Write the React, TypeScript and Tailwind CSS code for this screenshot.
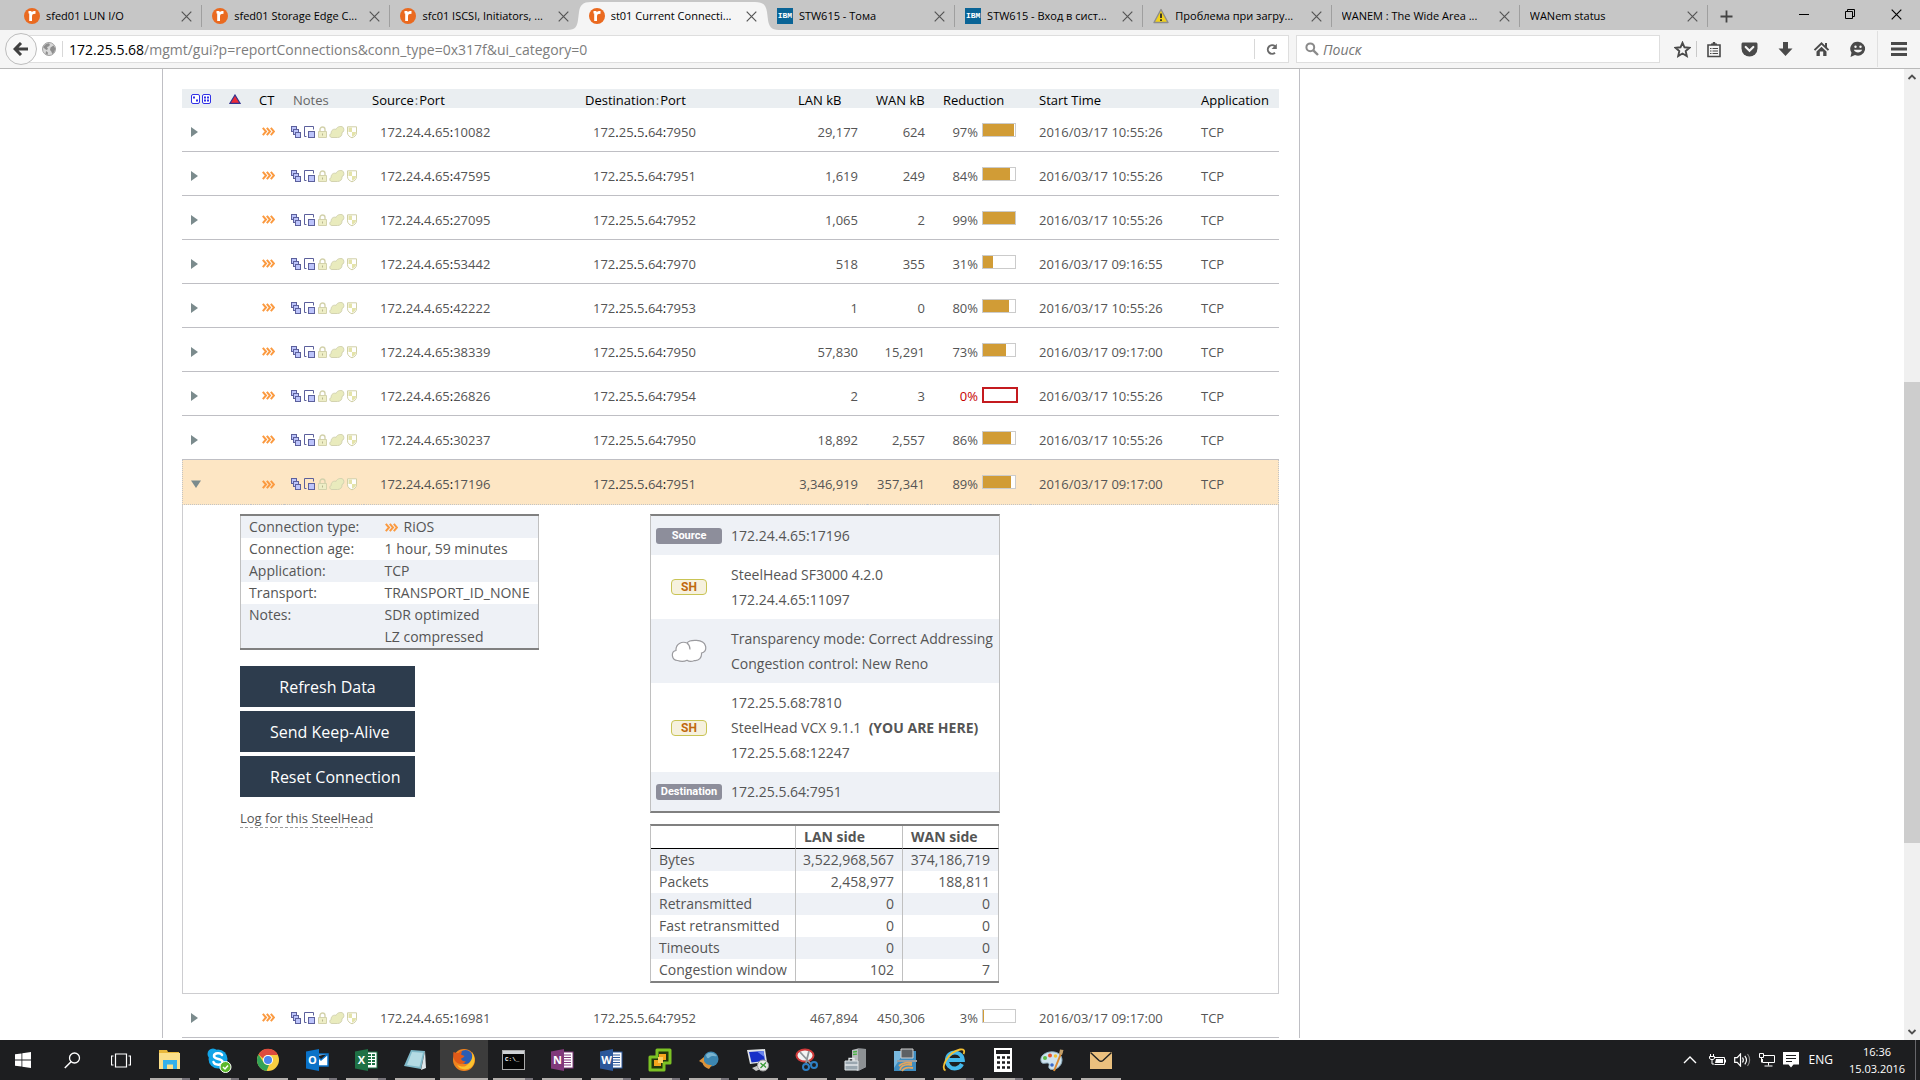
import React from "react";

type IconProps = { className?: string };

/* ---------- browser icons ---------- */

const RiverbedIcon = () => (
  <svg width="16" height="16" viewBox="0 0 16 16" className="shrink-0">
    <circle cx="8" cy="8" r="8" fill="#ea6a20" />
    <path d="M4.500 3h3v1.200C8.300 3.300 9.500 3 11.500 3v2.800C8.900 5.800 8 6.500 8 8.500V13H5.200V5.400H4.500z" fill="#fff" />
  </svg>
);

const IbmIcon = () => (
  <span className="flex h-4 w-4 shrink-0 items-center justify-center bg-[#0a6496] font-['Liberation_Mono'] text-[8px] font-bold leading-none text-white">
    IBM
  </span>
);

const WarningIcon = () => (
  <svg width="16" height="16" viewBox="0 0 16 16" className="shrink-0">
    <path d="M8 1.500 15 14.500H1z" fill="#f2d21b" stroke="#8d8d8d" strokeWidth="1.400" strokeLinejoin="round" />
    <path d="M8 5.500v4.500M8 11.300v1.700" stroke="#222" strokeWidth="1.700" />
  </svg>
);

const CloseIcon = ({ className }: IconProps) => (
  <svg width="11" height="11" viewBox="0 0 11 11" className={className}>
    <path d="M.7.7l9.600 9.600M10.300.7.7 10.300" stroke="currentColor" strokeWidth="1.200" />
  </svg>
);

const BackArrow = () => (
  <svg width="16" height="14" viewBox="0 0 16 14">
    <path d="M8 1 2 7l6 6M2.500 7H15" fill="none" stroke="#404040" strokeWidth="3" />
  </svg>
);

const GlobeIcon = () => (
  <svg width="14" height="14" viewBox="0 0 14 14">
    <circle cx="7" cy="7" r="6.500" fill="#d8d8d8" stroke="#a2a2a2" />
    <path d="M1 5l3-3 3-.8L8 3 6.500 4.500 5 5l1 2-1.500 1L3 7zM8.500 5.500l3-2 1.800 3-1 3.500-2 2-1-2.500L8 8zM4 9l2 1.500L5.500 13 3.500 12z" fill="#8e8e8e" />
  </svg>
);

const ReloadIcon = () => (
  <svg width="13" height="13" viewBox="0 0 13 13">
    <path d="M10 9.700A4.300 4.300 0 1 1 10 3.300" fill="none" stroke="#6a6a6a" strokeWidth="2" />
    <path d="M11.800.8v5.200H6.600z" fill="#6a6a6a" />
  </svg>
);

const SearchIcon = () => (
  <svg width="14" height="14" viewBox="0 0 14 14">
    <circle cx="5.300" cy="5.300" r="3.900" fill="none" stroke="#8a8a8a" strokeWidth="2" />
    <path d="M8.300 8.300l4.700 4.700" stroke="#8a8a8a" strokeWidth="2.400" />
  </svg>
);

const StarIcon = () => (
  <svg width="17" height="17" viewBox="0 0 17 17">
    <path d="M8.500 1.800l2 4.500 4.900.5-3.700 3.300 1.100 4.900-4.300-2.500L4.200 15l1.100-4.900L1.600 6.800l4.900-.5z" fill="none" stroke="#4a4a4a" strokeWidth="1.900" />
  </svg>
);

const ListIcon = () => (
  <svg width="16" height="17" viewBox="0 0 16 17">
    <path d="M2 4h12v11.500H2z" fill="none" stroke="#4a4a4a" strokeWidth="1.600" />
    <path d="M5 4V2.500h1.500L7 1h2l.5 1.500H11V4z" fill="#4a4a4a" />
    <path d="M4 7.500h1.500M6.500 7.500H12M4 10h1.500M6.500 10H12M4 12.500h1.500M6.500 12.500H12" stroke="#4a4a4a" strokeWidth="1.200" />
  </svg>
);

const PocketIcon = () => (
  <svg width="17" height="15" viewBox="0 0 17 15">
    <path d="M2 .5h13c.8 0 1.500.7 1.500 1.500v4.500a8 8 0 0 1-16 0V2C.5 1.200 1.200.5 2 .5z" fill="#4a4a4a" />
    <path d="M4.700 5l3.800 3.800L12.300 5" fill="none" stroke="#f5f5f5" strokeWidth="2.200" strokeLinecap="round" />
  </svg>
);

const DownloadIcon = () => (
  <svg width="15" height="16" viewBox="0 0 15 16">
    <path d="M5 1h5v6.500h4.500L7.500 15 .5 7.500H5z" fill="#4a4a4a" />
  </svg>
);

const HomeIcon = () => (
  <svg width="17" height="16" viewBox="0 0 17 16">
    <path d="M8.500 1 .8 8.500l1.400 1.300 6.300-6 6.300 6 1.400-1.300L14 6.300V2h-2v2.400z" fill="#4a4a4a" />
    <path d="M3.500 10.500l5-4.700 5 4.700V15h-3.300v-4.500H6.800V15H3.500z" fill="#4a4a4a" />
  </svg>
);

const SmileIcon = () => (
  <svg width="17" height="17" viewBox="0 0 17 17">
    <path d="M9 .8a7 7 0 1 1-3 13.300L1.500 16l1-4.300A7 7 0 0 1 9 .8z" fill="#4a4a4a" />
    <circle cx="6.500" cy="5.800" r="1.200" fill="#f5f5f5" />
    <circle cx="11.500" cy="5.800" r="1.200" fill="#f5f5f5" />
    <path d="M4.800 8.800c1.500 3.500 6.900 3.500 8.400 0z" fill="#f5f5f5" />
  </svg>
);

const MenuIcon = () => (
  <svg width="16" height="14" viewBox="0 0 16 14">
    <path d="M0 1.500h16M0 7h16M0 12.500h16" stroke="#4a4a4a" strokeWidth="2.800" />
  </svg>
);

/* ---------- page icons ---------- */

const SortDice = () => (
  <svg width="20" height="10" viewBox="0 0 20 10">
    <g fill="#fff" stroke="#3131e6">
      <rect x=".5" y=".5" width="8" height="9" rx="1.500" />
      <rect x="11.500" y=".5" width="8" height="9" rx="1.500" />
    </g>
    <path d="M2 2.500h2v2H2zM5 5.500h2v2H5zM13 2.500h2v2h-2zM16 2.500h2v2h-2zM13 5.500h2v2h-2zM16 5.500h2v2h-2z" fill="#3131e6" />
  </svg>
);

const AlertTriangle = () => (
  <svg width="12" height="10" viewBox="0 0 12 10">
    <path d="M6 1 11 9.300H1z" fill="#ee2a35" stroke="#33338f" strokeWidth="1.200" />
  </svg>
);

const Chevrons = ({ className }: IconProps) => (
  <svg width="13" height="9" viewBox="0 0 13 9" className={className}>
    <path d="M.8.8 4 4.500.8 8.200M4.800.8 8 4.500 4.800 8.200M8.800.8 12 4.500 8.800 8.200" fill="none" stroke="#fb9a40" strokeWidth="2" />
  </svg>
);

const NoteIcons = ({ className }: IconProps) => (
  <svg width="67" height="13" viewBox="0 0 67 13" className={className}>
    <g fill="#bcc4fb" stroke="#5c609c">
      <rect x=".5" y=".5" width="5" height="5" />
      <rect x="2.500" y="3.500" width="5" height="5" />
      <rect x="4.500" y="6.500" width="5" height="5" />
      <path d="M15.500 10.500h-2v-10h9v3" fill="none" />
      <rect x="17.500" y="5.500" width="6" height="6" />
    </g>
    <path d="M29 6V3.500a2.500 2.500 0 0 1 5 0V6" fill="none" stroke="#d3d2ac" strokeWidth="1.400" />
    <path d="M27.500 5.500h8v6h-8z" fill="#eeeec6" stroke="#d3d2ac" />
    <path d="M31.500 7.500v2" stroke="#b8b690" />
    <path d="M41 11.500c-2.800 0-2.800-3.500-.8-4-.4-3.500 2.800-5 4.800-4 1-3.500 6.500-4 7.500-1.500.8 2.200.2 4-1.500 4.500.3 3.500-2 5-4.500 5z" fill="#e9ebbd" stroke="#d3d3b0" />
    <path d="M56.500.8h9v6c0 2.500-2 4-4.500 5-2.500-1-4.500-2.500-4.500-5z" fill="#fff" stroke="#d0cfa6" />
    <path d="M57.500 1.500H61V6h-3.500zM61 6h4c0 2.500-2 4-4 4.800z" fill="#e4e3a9" />
  </svg>
);

const CloudIcon = () => (
  <svg width="36" height="24" viewBox="0 0 36 24">
    <path d="M6.500 21.500C.5 21.500-.5 12.500 5 11.500 4.500 5 11 1.800 16 4c2.500-3.500 16.500-4.500 18.500 3 1 4-1 6.500-4 7 .5 4.500-2.500 8-7 7.500-3 1.300-6 .8-7.500-.3-2.500 1.300-6.500 1.300-9.500.3zM16 4c2 1.500 3 3.500 3 6.500" fill="#fff" stroke="#9b9b9f" strokeWidth="1.200" />
  </svg>
);

/* ---------- data ---------- */

type Tab = { title: string; icon?: "rb" | "ibm" | "warn"; active?: boolean; noDivider?: boolean };
const tabs: Tab[] = [
  { title: "sfed01 LUN I/O", icon: "rb" },
  { title: "sfed01 Storage Edge C...", icon: "rb" },
  { title: "sfc01 ISCSI, Initiators, ...", icon: "rb", noDivider: true },
  { title: "st01 Current Connecti...", icon: "rb", active: true, noDivider: true },
  { title: "STW615 - Тома", icon: "ibm" },
  { title: "STW615 - Вход в сист...", icon: "ibm" },
  { title: "Проблема при загру...", icon: "warn" },
  { title: "WANEM : The Wide Area ..." },
  { title: "WANem status" },
];

type Conn = { src: string; dst: string; lan: string; wan: string; pct: number; start: string; open?: boolean };
const rows: Conn[] = [
  { src: "172.24.4.65:10082", dst: "172.25.5.64:7950", lan: "29,177", wan: "624", pct: 97, start: "2016/03/17 10:55:26" },
  { src: "172.24.4.65:47595", dst: "172.25.5.64:7951", lan: "1,619", wan: "249", pct: 84, start: "2016/03/17 10:55:26" },
  { src: "172.24.4.65:27095", dst: "172.25.5.64:7952", lan: "1,065", wan: "2", pct: 99, start: "2016/03/17 10:55:26" },
  { src: "172.24.4.65:53442", dst: "172.25.5.64:7970", lan: "518", wan: "355", pct: 31, start: "2016/03/17 09:16:55" },
  { src: "172.24.4.65:42222", dst: "172.25.5.64:7953", lan: "1", wan: "0", pct: 80, start: "2016/03/17 10:55:26" },
  { src: "172.24.4.65:38339", dst: "172.25.5.64:7950", lan: "57,830", wan: "15,291", pct: 73, start: "2016/03/17 09:17:00" },
  { src: "172.24.4.65:26826", dst: "172.25.5.64:7954", lan: "2", wan: "3", pct: 0, start: "2016/03/17 10:55:26" },
  { src: "172.24.4.65:30237", dst: "172.25.5.64:7950", lan: "18,892", wan: "2,557", pct: 86, start: "2016/03/17 10:55:26" },
  { src: "172.24.4.65:17196", dst: "172.25.5.64:7951", lan: "3,346,919", wan: "357,341", pct: 89, start: "2016/03/17 09:17:00", open: true },
  { src: "172.24.4.65:16981", dst: "172.25.5.64:7952", lan: "467,894", wan: "450,306", pct: 3, start: "2016/03/17 09:17:00" },
];

const stats: [string, string, string][] = [
  ["Bytes", "3,522,968,567", "374,186,719"],
  ["Packets", "2,458,977", "188,811"],
  ["Retransmitted", "0", "0"],
  ["Fast retransmitted", "0", "0"],
  ["Timeouts", "0", "0"],
  ["Congestion window", "102", "7"],
];

/* ---------- browser chrome ---------- */

function TabStrip() {
  return (
    <div className="flex h-[30px] shrink-0 bg-[#c6c6c6] pl-3.5">
      <div className="flex min-w-0 flex-1">
        {tabs.map((t) => (
          <div key={t.title} className="relative flex min-w-0 flex-1 items-center px-2.5">
            {t.active && (
              <svg viewBox="0 0 212 28" preserveAspectRatio="none" className="absolute -left-3 bottom-0 h-7 w-[212px]">
                <path d="M0 28c9 0 10-4 11-10l1-8C13 3 16 0 24 0h164c8 0 11 3 12 10l1 8c1 6 3 10 11 10z" fill="#f5f5f5" />
              </svg>
            )}
            <a href="#tab" className="relative flex min-w-0 flex-1 items-center gap-1.5 pt-0.5 text-[11px] text-black">
              {t.icon === "rb" && <RiverbedIcon />}
              {t.icon === "ibm" && <IbmIcon />}
              {t.icon === "warn" && <WarningIcon />}
              <span className="overflow-hidden whitespace-nowrap">{t.title}</span>
            </a>
            <button aria-label="Close tab" className="relative pt-0.5 text-[#555]">
              <CloseIcon />
            </button>
            {!t.noDivider && <span className="absolute right-0 top-[5px] h-[22px] w-px bg-[#9f9f9f]" />}
          </div>
        ))}
      </div>
      <div className="flex w-[212px] items-center pl-3">
        <button aria-label="New tab" className="pt-0.5 text-[#444]">
          <svg width="13" height="13" viewBox="0 0 13 13">
            <path d="M6.500.5v12M.5 6.500h12" stroke="currentColor" strokeWidth="1.800" />
          </svg>
        </button>
        <div className="ml-auto flex items-center gap-9 pb-0.5 pr-[18px] text-black">
          <button aria-label="Minimize">
            <svg width="10" height="10" viewBox="0 0 10 10">
              <path d="M0 5.500h10" stroke="currentColor" />
            </svg>
          </button>
          <button aria-label="Restore">
            <svg width="10" height="10" viewBox="0 0 10 10">
              <path d="M.5 2.500h7v7h-7zM2.500 2.500v-2h7v7h-2" fill="none" stroke="currentColor" />
            </svg>
          </button>
          <button aria-label="Close">
            <CloseIcon />
          </button>
        </div>
      </div>
    </div>
  );
}

function Toolbar() {
  return (
    <div className="flex h-[39px] shrink-0 items-center border-b border-[#b9b9b9] bg-[#f5f5f5] pl-[5px]">
      <button aria-label="Back" className="relative z-10 flex h-8 w-8 shrink-0 items-center justify-center rounded-full border border-[#bdbdbd] bg-[#f8f8f8]">
        <BackArrow />
      </button>
      <div className="-ml-2 flex h-[28px] min-w-0 flex-1 items-center border border-[#dedede] bg-white pl-3">
        <GlobeIcon />
        <span className="ml-1.5 h-4 w-px bg-[#d8d8d8]" />
        <div className="ml-1.5 min-w-0 flex-1 whitespace-nowrap text-[14px] text-[#7d7d7d]">
          <span className="text-black">172.25.5.68</span>/mgmt/gui?p=reportConnections&amp;conn_type=0x317f&amp;ui_category=0
        </div>
        <button aria-label="Reload" className="flex h-5 w-[34px] items-center justify-center border-l border-[#d8d8d8]">
          <ReloadIcon />
        </button>
      </div>
      <label className="ml-[7px] flex h-[28px] w-[364px] items-center border border-[#dedede] bg-white pl-2">
        <SearchIcon />
        <input aria-label="Поиск" placeholder="Поиск" className="ml-1 min-w-0 flex-1 text-[14px] italic outline-none placeholder:text-[#757575]" />
      </label>
      <div className="flex items-center">
        <button aria-label="Bookmark" className="flex w-9 justify-center pl-2"><StarIcon /></button>
        <span className="h-4 w-px bg-[#c9c9c9]" />
        <button aria-label="Bookmarks list" className="flex w-[34px] justify-center"><ListIcon /></button>
        <button aria-label="Pocket" className="flex w-9 justify-center"><PocketIcon /></button>
        <button aria-label="Downloads" className="flex w-9 justify-center"><DownloadIcon /></button>
        <button aria-label="Home" className="flex w-9 justify-center"><HomeIcon /></button>
        <button aria-label="Hello" className="flex w-9 justify-center"><SmileIcon /></button>
        <span className="ml-0.5 h-9 w-px bg-[#e0e0e0]" />
        <button aria-label="Menu" className="flex w-[42px] justify-center"><MenuIcon /></button>
      </div>
    </div>
  );
}

/* ---------- report ---------- */

const Address = ({ value }: { value: string }) => (
  <>
    {value.split(/([.:])/).map((p, i) =>
      p === "." || p === ":" ? <span key={i} className="text-black">{p}</span> : p,
    )}
  </>
);

function Reduction({ pct }: { pct: number }) {
  const none = pct === 0;
  return (
    <div className="flex items-center pl-2">
      <span className={none ? "w-[35px] text-right text-[#c60000]" : "w-[35px] text-right"}>{pct}%</span>
      {none ? (
        <span className="mb-0.5 ml-1 h-4 w-9 border-2 border-[#c41a1f] bg-white" />
      ) : (
        <span className="mb-1 ml-1 h-3.5 w-[34px] border border-[#cbcbcb] bg-white">
          <span className="block h-full bg-[#d19c36]" style={{ width: `${pct}%` }} />
        </span>
      )}
    </div>
  );
}

function InfoRow({ label, children, shade }: { label: string; children: React.ReactNode; shade?: boolean }) {
  return (
    <tr className={shade ? "bg-[#eef1f6]" : "bg-white"}>
      <th scope="row" className="w-[136px] pl-2 text-left align-top font-normal">{label}</th>
      <td className="pl-2">{children}</td>
    </tr>
  );
}

function PathRow({ badge, lines, shade }: { badge: React.ReactNode; lines: React.ReactNode[]; shade?: boolean }) {
  return (
    <tr className={shade ? "bg-[#eef1f6]" : "bg-white"}>
      <td className="w-20 py-[7px] pl-[5px]">
        <div className="flex w-[66px] justify-center">{badge}</div>
      </td>
      <td className="py-[7px] leading-[25px]">
        {lines.map((l, i) => (
          <div key={i} className="whitespace-nowrap">{l}</div>
        ))}
      </td>
    </tr>
  );
}

const GreyBadge = ({ text }: { text: string }) => (
  <span className="flex h-4 w-[66px] items-center justify-center rounded-[3px] bg-[#8d8e9b] font-['Roboto'] text-[11px] font-bold leading-none text-white">
    {text}
  </span>
);

const ShBadge = () => (
  <span className="flex h-4 w-9 items-center justify-center rounded-[4px] border border-[#c9c455] bg-[#f6f1de] font-['Roboto'] text-[12px] font-bold leading-none text-[#c0690e]">
    SH
  </span>
);

function Details() {
  return (
    <div className="flex items-start gap-[111px] pb-2.5 pl-[57px] pt-[9px] text-[14px] leading-[22px]">
      <div className="w-[299px]">
        <table className="w-full border-collapse border-x border-y-2 border-x-[#c0c0c0] border-y-[#808080]">
          <tbody>
            <InfoRow label="Connection type:" shade>
              <span className="flex items-center gap-1.5"><Chevrons />RiOS</span>
            </InfoRow>
            <InfoRow label="Connection age:">1 hour, 59 minutes</InfoRow>
            <InfoRow label="Application:" shade>TCP</InfoRow>
            <InfoRow label="Transport:">TRANSPORT_ID_NONE</InfoRow>
            <InfoRow label="Notes:" shade>SDR optimized<br />LZ compressed</InfoRow>
          </tbody>
        </table>
        <div className="mt-4 flex w-[175px] flex-col gap-1 text-[16px] text-white">
          <button className="h-[41px] bg-[#2d3c4d] text-center">Refresh Data</button>
          <button className="h-[41px] bg-[#2d3c4d] pl-[30px] text-left">Send Keep-Alive</button>
          <button className="h-[41px] bg-[#2d3c4d] pl-[30px] text-left">Reset Connection</button>
        </div>
        <a href="#log" className="mt-3 inline-block border-b border-dashed border-[#9a9a9a] text-[13px] leading-[18px]">Log for this SteelHead</a>
      </div>
      <div className="w-[350px]">
        <table className="w-full border-separate border-spacing-0 border-x border-y-2 border-x-[#c0c0c0] border-y-[#808080]">
          <tbody>
            <PathRow shade badge={<GreyBadge text="Source" />} lines={["172.24.4.65:17196"]} />
            <PathRow badge={<ShBadge />} lines={["SteelHead SF3000 4.2.0", "172.24.4.65:11097"]} />
            <PathRow shade badge={<CloudIcon />} lines={["Transparency mode: Correct Addressing", "Congestion control: New Reno"]} />
            <PathRow
              badge={<ShBadge />}
              lines={["172.25.5.68:7810", <>SteelHead VCX 9.1.1 &nbsp;<b>(YOU ARE HERE)</b></>, "172.25.5.68:12247"]}
            />
            <PathRow shade badge={<GreyBadge text="Destination" />} lines={["172.25.5.64:7951"]} />
          </tbody>
        </table>
        <table className="mt-[11px] w-[349px] border-separate border-spacing-0 border-y-2 border-l border-y-[#808080] border-l-[#c0c0c0]">
          <thead>
            <tr className="text-left">
              <td className="border-b border-r border-b-black border-r-[#c0c0c0]" />
              <th scope="col" className="w-[107px] border-b border-r border-b-black border-r-[#c0c0c0] px-2">LAN side</th>
              <th scope="col" className="w-[96px] border-b border-r border-b-black border-r-[#c0c0c0] pl-2">WAN side</th>
            </tr>
          </thead>
          <tbody>
            {stats.map(([k, lan, wan]) => (
              <tr key={k} className="odd:bg-[#eef1f6]">
                <th scope="row" className="whitespace-nowrap border-r border-[#c0c0c0] pl-2 pr-[7px] text-left font-normal">{k}</th>
                <td className="border-r border-[#c0c0c0] pl-[7px] pr-2 text-right">{lan}</td>
                <td className="border-r border-[#c0c0c0] pl-[7px] pr-2 text-right">{wan}</td>
              </tr>
            ))}
          </tbody>
        </table>
      </div>
    </div>
  );
}

function ConnRow({ c }: { c: Conn }) {
  return (
    <>
      <tr
        className={
          c.open
            ? "h-[45px] bg-[#fde6c4] [&>td]:border-b [&>td]:border-dotted [&>td]:border-[#c4c4c4] [&>td]:pt-1 [&>td:first-child]:border-l [&>td:last-child]:border-r"
            : "h-11 [&>td]:border-b [&>td]:border-[#bfbfc4] [&>td]:pt-1"
        }
      >
        <td className={c.open ? "pl-2" : "pl-[9px]"}>
          <button aria-label={c.open ? "Collapse" : "Expand"} aria-expanded={!!c.open} className="block text-[#7b8b8d]">
            {c.open ? (
              <svg width="10" height="8" viewBox="0 0 10 8"><path d="M0 .5h10L5 8z" fill="currentColor" /></svg>
            ) : (
              <svg width="7" height="10" viewBox="0 0 7 10"><path d="M0 0v10l7-5z" fill="currentColor" /></svg>
            )}
          </button>
        </td>
        <td className="pl-[11px]"><Chevrons className="block" /></td>
        <td className="pl-[7px]"><NoteIcons className="mt-px block" /></td>
        <td className="pl-4"><Address value={c.src} /></td>
        <td className="pl-4"><Address value={c.dst} /></td>
        <td className="pr-[9px] text-right">{c.lan}</td>
        <td className="pr-[10px] text-right">{c.wan}</td>
        <td><Reduction pct={c.pct} /></td>
        <td className="pl-[9px]">{c.start}</td>
        <td className="pl-[9px]">TCP</td>
      </tr>
      {c.open && (
        <tr>
          <td colSpan={10} className="border-x border-b border-[#cdcdd0] p-0">
            <Details />
          </td>
        </tr>
      )}
    </>
  );
}

const HeadColon = () => <span className="px-px text-[#666]">:</span>;

function Report() {
  return (
    <main className="ml-[162px] w-full max-w-[1138px] border-x border-[#bfbfc4] pl-[19px] pr-5 pt-5">
      <table className="w-full table-fixed border-separate border-spacing-0 whitespace-nowrap text-[13px] leading-5 text-[#555]">
        <colgroup>
          <col className="w-[69px]" />
          <col className="w-[33px]" />
          <col className="w-[80px]" />
          <col className="w-[213px]" />
          <col className="w-[213px]" />
          <col className="w-[77px]" />
          <col className="w-[68px]" />
          <col className="w-[95px]" />
          <col className="w-[162px]" />
          <col />
        </colgroup>
        <thead>
          <tr className="bg-[#eaeef1] text-left text-black [&>th]:h-[19px] [&>th]:p-0 [&>th]:pt-1 [&>th]:font-normal [&>th]:leading-[15px]">
            <th scope="col">
              <span className="flex items-start gap-[18px] pb-1 pl-[9px]"><SortDice /><AlertTriangle /></span>
            </th>
            <th scope="col"><span className="pl-2">CT</span></th>
            <th scope="col" className="text-[#666]"><span className="pl-[9px]">Notes</span></th>
            <th scope="col"><span className="pl-2">Source<HeadColon />Port</span></th>
            <th scope="col"><span className="pl-2">Destination<HeadColon />Port</span></th>
            <th scope="col"><span className="pl-2">LAN kB</span></th>
            <th scope="col"><span className="pl-[9px]">WAN kB</span></th>
            <th scope="col"><span className="pl-2">Reduction</span></th>
            <th scope="col"><span className="pl-[9px]">Start Time</span></th>
            <th scope="col"><span className="pl-[9px]">Application</span></th>
          </tr>
        </thead>
        <tbody>
          {rows.map((c) => (
            <ConnRow key={c.src} c={c} />
          ))}
        </tbody>
      </table>
    </main>
  );
}

function Scrollbar() {
  return (
    <div className="flex w-4 shrink-0 flex-col items-center bg-[#f0f0f0] text-[#505050]">
      <svg width="16" height="17" viewBox="0 0 16 17"><path d="M4.500 10 8 6.500l3.500 3.500" fill="none" stroke="currentColor" strokeWidth="1.800" /></svg>
      <div className="flex-[296]" />
      <div className="w-full flex-[461] bg-[#cdcdcd]" />
      <div className="flex-[180]" />
      <svg width="16" height="17" viewBox="0 0 16 17"><path d="M4.500 7 8 10.500 11.500 7" fill="none" stroke="currentColor" strokeWidth="1.800" /></svg>
    </div>
  );
}

/* ---------- taskbar ---------- */

const Office = ({ letter, color, kind }: { letter: string; color: string; kind: "mail" | "grid" | "lines" }) => (
  <svg width="24" height="24" viewBox="0 0 24 24">
    <rect x="11" y="4" width="12" height="16" fill={kind === "mail" ? "none" : "#fff"} stroke={kind === "mail" ? "none" : color} />
    {kind === "mail" && <path d="M12 6h11v12H12zM12 8l4 4 7-6" fill="#fff" stroke={color} strokeWidth="1.500" />}
    {kind === "lines" && <path d="M13 7h8M13 9.500h8M13 12h8M13 14.500h8M13 17h8" stroke={color} strokeWidth="1.200" />}
    {kind === "grid" && <path d="M14 7h3M18 7h3M14 10h3M18 10h3M14 13h3M18 13h3M14 16h3M18 16h3" stroke={color} strokeWidth="1.800" />}
    <path d="M1 3.500 14 1v22L1 20.500z" fill={color} />
    <text x="7.500" y="16" textAnchor="middle" fontSize="11" fontWeight="700" fill="#fff" fontFamily="Open Sans">{letter}</text>
  </svg>
);

const appIcons: { name: string; icon: React.ReactNode; state: "none" | "run" | "multi" | "active" }[] = [
  {
    name: "Start", state: "none",
    icon: <svg width="16" height="16" viewBox="0 0 16 16"><path d="M0 2.300 6.500 1.400v6.200H0zM7.300 1.300 16 0v7.600H7.300zM0 8.400h6.500v6.200L0 13.700zM7.300 8.400H16V16l-8.700-1.300z" fill="#fff" /></svg>,
  },
  {
    name: "Search", state: "none",
    icon: <svg width="17" height="17" viewBox="0 0 17 17"><circle cx="10.500" cy="6" r="5" fill="none" stroke="#fff" strokeWidth="1.300" /><path d="M7 9.700.8 16" stroke="#fff" strokeWidth="1.500" /></svg>,
  },
  {
    name: "Task view", state: "none",
    icon: <svg width="20" height="15" viewBox="0 0 20 15"><path d="M4.500 1h11v13h-11zM2.500 3h-2v9h2M17.500 3h2v9h-2" fill="none" stroke="#fff" strokeWidth="1.200" /></svg>,
  },
  {
    name: "Explorer", state: "multi",
    icon: <svg width="24" height="22" viewBox="0 0 24 22"><path d="M1 1h8l1 2h11v17H1z" fill="#e9b83c" /><path d="M1 4h21v16H1z" fill="#fbdf8a" /><path d="M5 20v-9h14v9h-4v-4.500H9V20z" fill="#35b0ea" /></svg>,
  },
  {
    name: "Skype", state: "multi",
    icon: <svg width="26" height="26" viewBox="0 0 26 26"><circle cx="12" cy="12" r="9.500" fill="#12a5e8" /><circle cx="7" cy="7" r="5.500" fill="#12a5e8" /><circle cx="16.500" cy="17" r="5.500" fill="#12a5e8" /><path d="M16 8c-1-2.500-8-2.500-8 1 0 4 8.500 2 8.500 6 0 3.500-8 3.500-9 0" fill="none" stroke="#fff" strokeWidth="2.500" strokeLinecap="round" /><circle cx="19.500" cy="20" r="5.500" fill="#5cb82c" stroke="#fff" /><path d="M17 20l2 2 3-3.500" fill="none" stroke="#fff" strokeWidth="1.500" /></svg>,
  },
  {
    name: "Chrome", state: "run",
    icon: <svg width="24" height="24" viewBox="0 0 24 24"><circle cx="12" cy="12" r="11" fill="#f8ce40" /><path d="M2.500 6.500A11 11 0 0 1 22 7H12a5 5 0 0 0-4.800 3.500z" fill="#dd4b3e" /><path d="M2.500 6.500 7.700 14.500a5 5 0 0 0 5.300 2.400L10.500 23A11 11 0 0 1 2.500 6.500z" fill="#33a357" /><circle cx="12" cy="12" r="5" fill="#fff" /><circle cx="12" cy="12" r="4" fill="#4a86ee" /></svg>,
  },
  { name: "Outlook", state: "multi", icon: <Office letter="O" color="#0a72c8" kind="mail" /> },
  { name: "Excel", state: "multi", icon: <Office letter="X" color="#1f7145" kind="grid" /> },
  {
    name: "Notepad", state: "run",
    icon: <svg width="24" height="24" viewBox="0 0 24 24"><path d="M8 2l14 1-4 18L1 18z" fill="#7fb9c9" /><path d="M9 4l11 .8-3.500 14L4 17z" fill="#b4dbe4" /><path d="M22 3l1 17-5 2z" fill="#dfe7ea" /></svg>,
  },
  {
    name: "Firefox", state: "active",
    icon: <svg width="24" height="24" viewBox="0 0 24 24"><circle cx="12" cy="12" r="11" fill="#f0831e" /><circle cx="13.500" cy="9" r="7" fill="#2a5db4" /><path d="M20 4c3.500 5 3.500 12-1 15.500-5 3.500-12 2-14-3 4 3 9 2.500 10.500 0C20 13 21 9 20 4z" fill="#fbc22e" /><path d="M1.500 4c2 1 3 1 5 1 2-2 3.500-1.500 3.500-1.500L9 6.500l3.500 1.500c-.5 2-3 1.500-3.500 3 1 2 3 2.500 5 2-2 3.500-7 4-10 1C1 11 1 7 1.500 4z" fill="#e25a18" /></svg>,
  },
  {
    name: "Command prompt", state: "multi",
    icon: <svg width="23" height="20" viewBox="0 0 23 20"><rect x=".5" y=".5" width="22" height="19" fill="#050505" stroke="#aaa" /><path d="M1 1h21v3H1z" fill="#d0d3d6" /><text x="3" y="11" fontSize="6" fontWeight="700" fill="#fff" fontFamily="Liberation Mono">C:\_</text></svg>,
  },
  { name: "OneNote", state: "run", icon: <Office letter="N" color="#80397b" kind="lines" /> },
  { name: "Word", state: "multi", icon: <Office letter="W" color="#2b579a" kind="lines" /> },
  {
    name: "vSphere", state: "multi",
    icon: <svg width="24" height="24" viewBox="0 0 24 24"><path d="M9 2h13v13h-6v7H2V9h7z" fill="#24350c" stroke="#7cc224" strokeWidth="3" strokeLinejoin="round" /><path d="M11 6h7v6h-7zM6 12h7v6H6z" fill="#f5a51c" /><path d="M10 9h5v6h-5z" fill="#fbcf62" /></svg>,
  },
  {
    name: "Network globe", state: "multi",
    icon: <svg width="22" height="20" viewBox="0 0 22 20"><circle cx="13" cy="9" r="7.500" fill="#3c86b0" /><path d="M8 5c3-4 9-2 11 1-3 1-5-1-7 1s-3 2-4-2z" fill="#79b4d0" /><path d="M1 11l5-4v4c2 4 5 4 8 4l-3 4C8 18 5 16 4.500 13z" fill="#dc933a" /></svg>,
  },
  {
    name: "Remote desktop", state: "run",
    icon: <svg width="24" height="24" viewBox="0 0 24 24"><path d="M1 2 19 1l2 13-17 2z" fill="#dfe3e6" /><path d="M3 4l14.500-1L19 13 5.500 14.500z" fill="#1730c8" /><path d="M11 3.500 17.500 3l1 6z" fill="#6a86ee" /><path d="M6 20l7-3 4 3-7 3z" fill="#c8c8c8" /><circle cx="17" cy="17.500" r="5.500" fill="#e8e8e8" stroke="#999" /><path d="M14.500 15l2.500 2.500-2.500 2.500M20 14.500 17.500 17l2.500 2.500" stroke="#3a9b38" fill="none" strokeWidth="1.300" /></svg>,
  },
  {
    name: "Snipping tool", state: "run",
    icon: <svg width="24" height="24" viewBox="0 0 24 24"><ellipse cx="10" cy="7.500" rx="8.500" ry="6" fill="#f4f4f4" stroke="#d03a3a" strokeWidth="2" /><path d="M5 4l11 12M14 3l-3 12" stroke="#8f9599" strokeWidth="1.800" /><circle cx="11" cy="19" r="3" fill="none" stroke="#2d7fc4" strokeWidth="2" /><circle cx="19" cy="17" r="3" fill="none" stroke="#2d7fc4" strokeWidth="2" /></svg>,
  },
  {
    name: "Server manager", state: "run",
    icon: <svg width="24" height="24" viewBox="0 0 24 24"><path d="M8 2l6-1.500 8 .5v18l-8 4-6-3z" fill="#b9bcbe" /><path d="M14 .5l8 .5v18l-8 4z" fill="#8d9194" /><path d="M9 4l4-.5M9 6.500l4-.3" stroke="#4bb445" strokeWidth="1.300" /><path d="M1 13h13v9H1z" fill="#9aa7b0" stroke="#dfe5e8" /><path d="M5 13v-2.500h5V13M1 17h13" fill="none" stroke="#e4e8ea" strokeWidth="1.300" /></svg>,
  },
  {
    name: "Device console", state: "run",
    icon: <svg width="24" height="24" viewBox="0 0 24 24"><path d="M1 3h22v20H1z" fill="#3f8dc0" /><path d="M1 3h11L1 20z" fill="#78b8de" /><path d="M8 1h12v9H8z" fill="#5d6164" stroke="#d0d0d0" /><path d="M4 12h20v2H4z" fill="#9b9fa2" /><path d="M7 22c1-5 5-6 12-5M9 23c2-4 6-4 11-3M6 18c3-3 8-4 13-3" fill="none" stroke="#e2a55e" strokeWidth="1.800" /></svg>,
  },
  {
    name: "Internet Explorer", state: "multi",
    icon: <svg width="24" height="24" viewBox="0 0 24 24"><path d="M20 16a8 8 0 1 1 .8-4H7" fill="none" stroke="#45b9ec" strokeWidth="4" /><path d="M3.500 22.500C-2 20 6 4 18 1.500c4-.8 5 1.500 3.500 4.500" fill="none" stroke="#f4c033" strokeWidth="1.800" /></svg>,
  },
  {
    name: "Calculator", state: "multi",
    icon: <svg width="18" height="24" viewBox="0 0 18 24"><path d="M0 0h18v24H0z" fill="#fff" /><path d="M2 2h14v4H2z" fill="#1c1c1e" /><path d="M3 9.500h3M8 9.500h3M13 9.500h3M3 14.500h3M8 14.500h3M13 14.500h3M3 19.500h3M8 19.500h3M13 19.500h3" stroke="#1c1c1e" strokeWidth="2.400" /></svg>,
  },
  {
    name: "Paint", state: "run",
    icon: <svg width="24" height="24" viewBox="0 0 24 24"><path d="M10 4c6-1 12 2 12 8 0 7-8 11-12 9-3-2 1-5-2-6-3-.5-6 2-7-2C0 8 5 4.500 10 4z" fill="#cfe3ef" stroke="#8fb0c2" /><circle cx="5" cy="10" r="2" fill="#5dbb46" /><circle cx="10" cy="7.500" r="2" fill="#e8542f" /><circle cx="15.500" cy="8" r="1.800" fill="#f2c230" /><circle cx="12" cy="17" r="1.800" fill="#3869c9" /><path d="M22 3 14 23" stroke="#d88a33" strokeWidth="2" /><path d="M20 1.500l3.500.5-1.500 5-3-1z" fill="#c3a06b" /></svg>,
  },
  {
    name: "Mail", state: "run",
    icon: <svg width="22" height="17" viewBox="0 0 22 17"><path d="M0 0h22v17H0z" fill="#eac07e" /><path d="M.5.5 9 8.500c1.500 1.200 2.500 1.200 4 0L21.500.5" fill="none" stroke="#222" strokeWidth="1.400" /></svg>,
  },
];

function Taskbar() {
  return (
    <footer className="flex h-10 shrink-0 items-stretch bg-[#1d1e20] text-white">
      <div className="-ml-px flex min-w-0 flex-1 gap-px">
        {appIcons.map((a) => (
          <button
            key={a.name}
            aria-label={a.name}
            className={
              a.state === "active"
                ? "relative flex w-12 items-center justify-center bg-[#3c3c3c]"
                : "relative flex w-12 items-center justify-center"
            }
          >
            {a.icon}
            {(a.state === "run" || a.state === "multi") && (
              <span className="absolute inset-x-1 bottom-0 flex h-0.5">
                <span className="flex-1 bg-[#b3afac]" />
                {a.state === "multi" && <span className="w-2 bg-[#77747a]" />}
              </span>
            )}
            {a.state === "active" && <span className="absolute inset-x-0 bottom-0 h-0.5 bg-[#b3afac]" />}
          </button>
        ))}
      </div>
      <div className="flex items-center gap-2">
        <svg width="14" height="8" viewBox="0 0 14 8"><path d="M1 7l6-6 6 6" fill="none" stroke="#fff" strokeWidth="1.400" /></svg>
        <svg width="17" height="12" viewBox="0 0 17 12" className="ml-1"><path d="M5.500 3.500h10v7h-10" fill="none" stroke="#fff" /><path d="M7 5h7v4H6zM15.500 5.500H17v3h-1.500z" fill="#fff" /><path d="M1.500 0v2.500M4.500 0v2.500M.5 2.500h5v2l-1.500 1h-2l-1.500-1zM3 5.500V10h2" fill="none" stroke="#fff" /></svg>
        <svg width="17" height="14" viewBox="0 0 17 14"><path d="M.7 4.700h2.500L6.500 1v12L3.200 9.300H.7z" fill="none" stroke="#fff" strokeWidth="1.200" /><path d="M8.500 4.500c1 1.500 1 3.500 0 5M10.800 2.800c2 2.500 2 6 0 8.500" fill="none" stroke="#fff" strokeWidth="1.200" /><path d="M13.500 1c2.800 3.500 2.800 8.500 0 12" fill="none" stroke="#888" strokeWidth="1.200" /></svg>
        <svg width="16" height="14" viewBox="0 0 16 14"><path d="M5 2.500h10.500v7h-12V6M9.500 9.500v3M5.500 13h8M.5.500h4v4h-4zM2.500 4.500V9.500" fill="none" stroke="#fff" /></svg>
        <svg width="16" height="16" viewBox="0 0 16 16"><path d="M0 0h16v12.500h-5.500L8 15.500l-2.500-3H0z" fill="#fff" /><path d="M3 3.500h10M3 6.500h10M3 9.500h6" stroke="#1d1e20" strokeWidth="1.200" /></svg>
        <span className="ml-0.5 text-[12px]">ENG</span>
        <div className="ml-1.5 w-[60px] text-center text-[11px] leading-[17px]">
          16:36<br />15.03.2016
        </div>
        <span className="h-10 w-[5px] border-l border-[#66666a]" />
      </div>
    </footer>
  );
}

export default function App() {
  return (
    <div className="flex h-screen flex-col overflow-hidden bg-white font-['Open_Sans','Noto_Sans',sans-serif]">
      <TabStrip />
      <Toolbar />
      <div className="flex min-h-0 flex-1">
        <div className="min-w-0 flex-1 overflow-hidden">
          <Report />
        </div>
        <Scrollbar />
      </div>
      <Taskbar />
    </div>
  );
}
